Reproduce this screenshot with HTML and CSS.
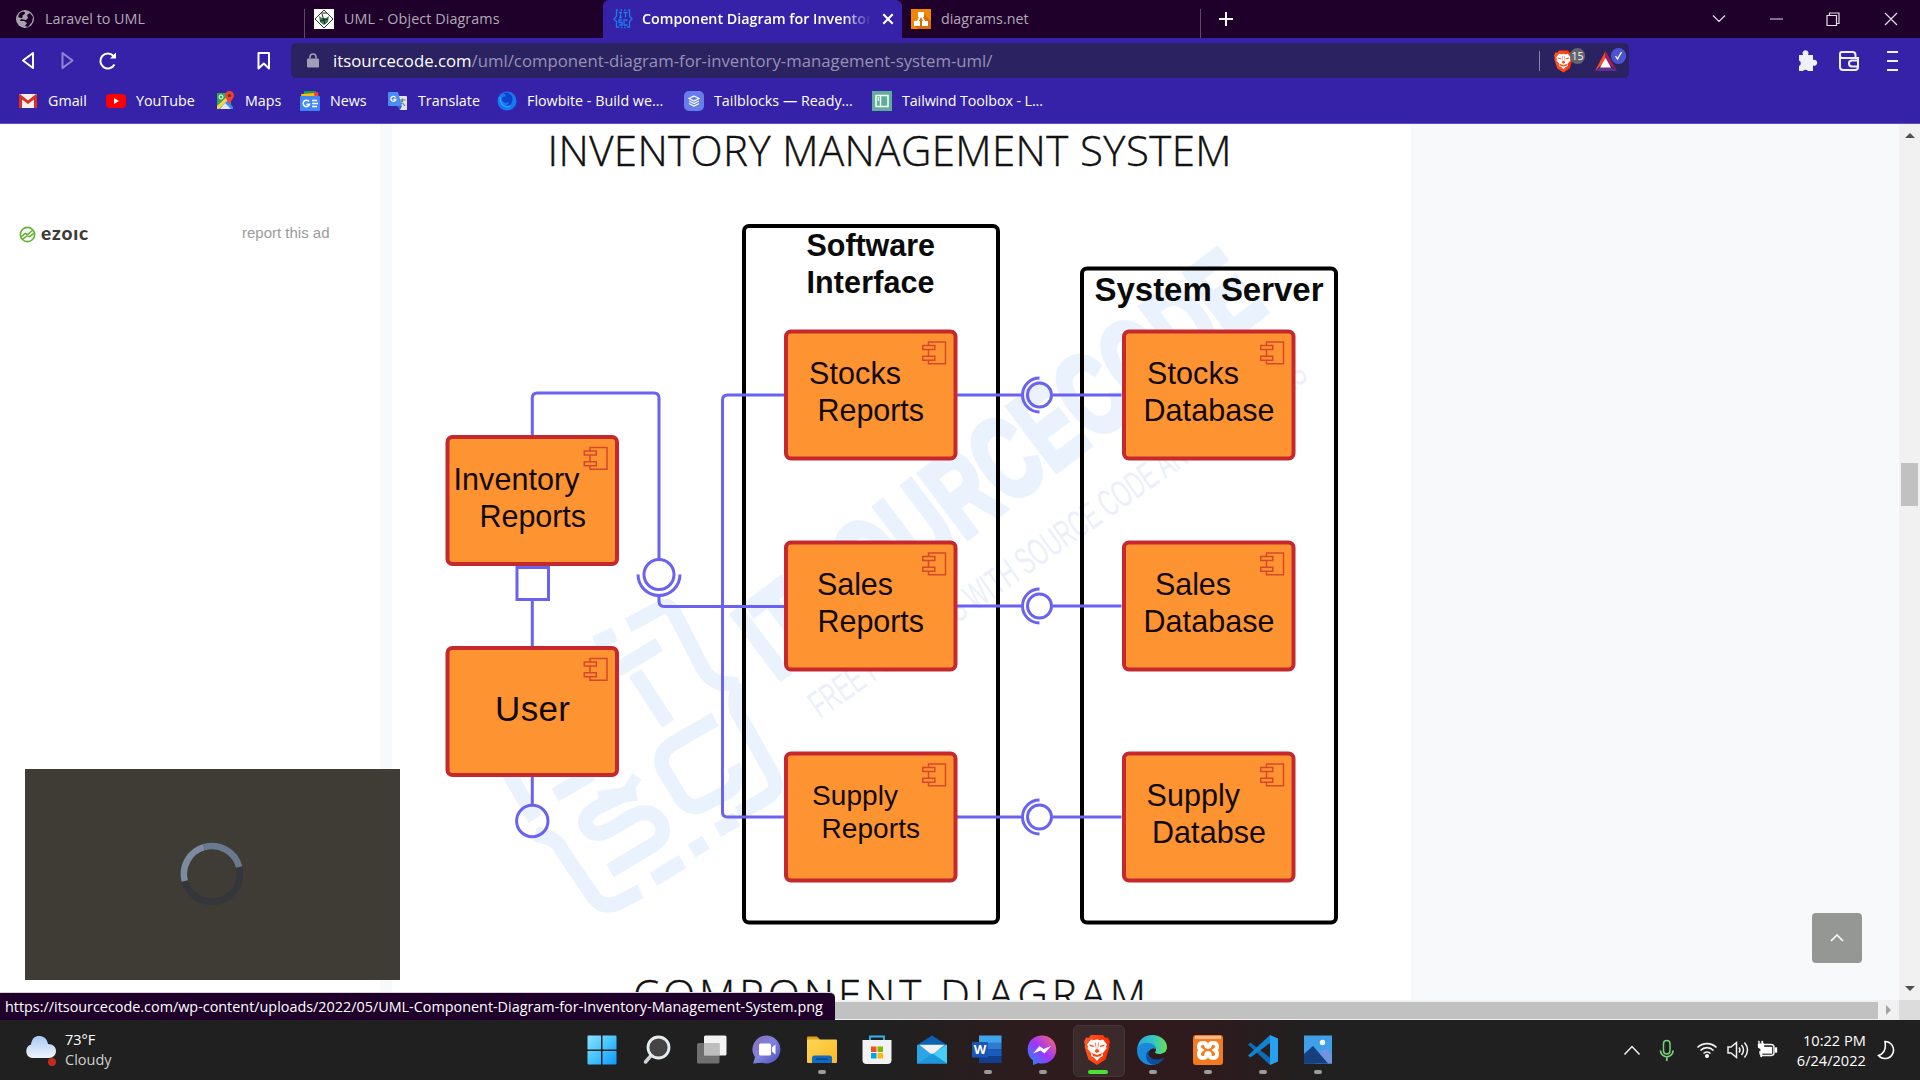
FILE: index.html
```html
<!DOCTYPE html>
<html lang="en">
<head>
<meta charset="utf-8">
<title>Component Diagram for Inventory Management System</title>
<link rel="stylesheet" href="styles.css">
</head>
<body>
<svg class="defs" width="0" height="0" aria-hidden="true">
  <defs>
    <linearGradient id="winG" x1="0" y1="0" x2="1" y2="1"><stop offset="0" stop-color="#8be2ff"/><stop offset=".5" stop-color="#45c4ff"/><stop offset="1" stop-color="#0f98ff"/></linearGradient>
    <linearGradient id="chatG" x1="0" y1="0" x2="1" y2="1"><stop offset="0" stop-color="#8f6bb4"/><stop offset=".5" stop-color="#7d83e0"/><stop offset="1" stop-color="#4c4bbd"/></linearGradient>
    <linearGradient id="foldG" x1="0" y1="0" x2="1" y2="1"><stop offset="0" stop-color="#ffd65c"/><stop offset="1" stop-color="#f8b91f"/></linearGradient>
    <linearGradient id="msgG" x1="0" y1="1" x2="1" y2="0"><stop offset="0" stop-color="#1690ff"/><stop offset=".5" stop-color="#a334fa"/><stop offset="1" stop-color="#ff6c60"/></linearGradient>
    <linearGradient id="braveG" x1="0" y1="0" x2="1" y2="0"><stop offset="0" stop-color="#ff5a1f"/><stop offset="1" stop-color="#ff2a00"/></linearGradient>
    <linearGradient id="edgeG" x1="0" y1="0" x2="1" y2="0"><stop offset="0" stop-color="#2aa8e0"/><stop offset=".55" stop-color="#35c6c4"/><stop offset="1" stop-color="#6ae04f"/></linearGradient>
    <linearGradient id="cloudG" x1="0" y1="0" x2="0" y2="1"><stop offset="0" stop-color="#a9c9f5"/><stop offset="1" stop-color="#eef4fd"/></linearGradient>
    <symbol id="lion" viewBox="0 0 26 30">
      <path fill="url(#braveG)" d="M7 0h12l2.500 3 2.500-.5L26 7l-1 3 .5 2-4 12.500L13 30 4.500 24.500.5 12 1 10 0 7l2-4.500 2.500.5z"/>
      <path fill="#fff" d="M7 4.500l3 .7 3-.9 3 .9 3-.7 4 5-1 2 .5 2-4 5 .5 2.500-3 1.500-3 3.500-3-3.500-3-1.500.5-2.500-4-5 .5-2-1-2z"/>
      <path fill="#fb4a1a" d="M5.500 9.500l5 1.500-1 1-4-1zM20.500 9.500l-5 1.500 1 1 4-1zM11.200 8l.8 6-1.500 2.500L13 18l2.500-1.500L14 14l.8-6-.8-.8-.3 7h-1.400l-.3-7zM8 18l5 2 5-2-1 3-4 1-4-1z"/>
    </symbol>
    <g id="comp">
      <rect class="box" x="2" y="2" width="169.500" height="127" rx="5"/>
      <path class="glyph" d="M144.500 16v-3.500h17v21.700h-17V31M144.500 20v6.500M138.800 16h12v4h-12zM138.800 26.700h12v4h-12z"/>
    </g>
    <g id="socket">
      <path d="M-83 0H-18M13 0H82"/><circle r="12"/><path d="M0-17A17 17 0 0 0 0 17"/>
    </g>
  </defs>
</svg>

<header class="chrome">
  <div class="tabstrip">
    <div class="tab t1"><svg class="fav" viewBox="0 0 20 20"><circle cx="10" cy="10" r="9" fill="#a6a1ac"/><path fill="#1e002a" d="M5 4c2-2 5-1.500 5 0 0 2-3 1.500-2.500 4 .5 1.500-2 1-3.500.5C2.500 8 4 5 5 4zM12 6l3-2 3 4-1 5-4 5-3-1 2-3-3-2-4 0 1-2 5 1 2-2z"/></svg><span class="cap c1">Laravel to UML</span></div>
    <div class="tab t2"><svg class="fav" viewBox="0 0 20 20"><path fill="#fff" d="M0 0h20v20H0z"/><path fill="none" stroke="#333" d="M10 1l9 9-9 9-9-9z"/><path fill="#3f7f55" d="M5 7l3 2h4l3-2-1 6-4 3-4-3z"/><path stroke="#222" d="M7 4l6 0M6 12l8-2M8 5l3 10"/></svg><span class="cap c2">UML - Object Diagrams</span></div>
    <div class="tab t3"><svg class="fav" viewBox="0 0 20 20"><path fill="none" stroke="#197bea" stroke-width="1.300" d="M5 1H3.500v6L1 10l2.500 2.500V18H6M15 1h1.500v6L19 10l-2.500 2.500V18H14M8 18.500h1.500M11 18.500h1.500M7.500 1h1.500M11 1h1.500M6 3.500h3M7.500 3.500v5M6 8.500h3M10.500 3.500h4M12.500 3.500v5M9 11H6v2.500h3V16H6M14.500 11H11v5h3.500"/></svg><span class="cap c3">Component Diagram for Inventory</span><svg class="x" viewBox="0 0 12 12"><path d="M2 2l8 8M10 2l-8 8"/></svg></div>
    <div class="tab t4"><svg class="fav" viewBox="0 0 20 20"><path fill="#f08705" d="M0 0h20v20H0z"/><path fill="#d86f00" d="M12 4l8 8v8H7l-4-4z"/><path fill="#fff" d="M7 3h6v5h-1l2 4h3v5h-6v-5h1l-2-4-2 4h1v5H3v-5h3l2-4H7z"/></svg><span class="cap c4">diagrams.net</span></div>
    <svg class="plus" viewBox="0 0 16 16"><path d="M8 1v14M1 8h14"/></svg>
    <svg class="winbtns" viewBox="0 0 186 14"><path d="M1 3.500l6 6 6-6M58 7h13M115 3.500h9.500v10H115zM117.500 3.500V1h9.500v10.500h-2.500M173 1l12 12M185 1l-12 12"/></svg>
  </div>
  <div class="toolbar">
    <svg class="nav" viewBox="0 0 270 36"><g fill="none" stroke="#fff" stroke-width="2" stroke-linejoin="round"><path d="M33 10v15l-10-7.500z"/><path opacity=".45" d="M62.500 10v15l10-7.500z"/><path d="M114.500 21.500a7.500 7.500 0 1 1-1-8.500"/><path d="M258.500 10h10.500v15.500l-5.200-5-5.300 5z"/></g><path fill="#fff" d="M116 9.500v6h-6z"/></svg>
    <div class="address">
      <svg class="lock" viewBox="0 0 12 14"><path fill="#a19fb6" d="M1 5h10q1 0 1 1v7q0 1-1 1H1q-1 0-1-1V6q0-1 1-1z"/><path fill="none" stroke="#a19fb6" stroke-width="1.600" d="M3 5V3.500a3 3 0 0 1 6 0V5"/></svg>
      <span class="url"><b>itsourcecode.com</b>/uml/component-diagram-for-inventory-management-system-uml/</span>
      <i class="rule"></i>
      <svg class="shield" viewBox="0 0 32 32"><use href="#lion" x="0" y="5" width="19" height="23"/><rect x="16" y="3" width="15" height="16" rx="7.500" fill="#62646e"/><text x="23.500" y="15" text-anchor="middle" class="badge">15</text></svg>
      <svg class="bat" viewBox="0 0 32 32"><path fill="#ff4724" d="M10.500 6v10L0 26z"/><path fill="#9e1f63" d="M10.500 6v10L22 26z"/><path fill="#662d91" d="M0 26h22l-6.500-4H6z"/><path fill="#fff" d="M10.500 13l5.500 9.500H5z"/><rect x="16" y="3" width="15" height="16" rx="7.500" fill="#4c54d2"/><path fill="none" stroke="#fff" stroke-width="1.300" d="M20.500 11l2 3 4-7"/></svg>
    </div>
    <svg class="tools" viewBox="0 0 102 26"><path fill="#f1effc" d="M2 7h4a3 3 0 1 1 5 0h5v5a3 3 0 1 1 0 5.500V23h-5a3 3 0 0 0-5 0H2v-5a3 3 0 0 0 0-5.500z"/><g fill="none" stroke="#f1effc" stroke-width="2"><path d="M58.500 9.500V7q0-3-3-3H45q-2 0-2 2v13q0 3 3 3h12q3 0 3-3v-9H45q-2 0-2-3M61 12.500h-6a3 3 0 0 0 0 6h6M90 4h11M90 13h11M90 22h11"/></g></svg>
  </div>
  <nav class="bookmarks">
    <a><svg viewBox="0 0 20 20"><path fill="#f3f1f0" d="M1 3h18v14H1z"/><path fill="#d93025" d="M1 17V4q0-1 1-1l8 6.500L18 3q1 0 1 1v13h-3V8.500L10 13 4 8.500V17z"/></svg><span class="b1">Gmail</span></a>
    <a><svg viewBox="0 0 20 20"><rect y="3" width="20" height="14" rx="4" fill="#f00"/><path fill="#fff" d="M8 7v6l5-3z"/></svg><span class="b2">YouTube</span></a>
    <a><svg viewBox="0 0 20 20"><path fill="#34a853" d="M2 2h14v16H2z"/><path fill="#4285f4" d="M12 9l6 7v2h-6l-4-4z"/><path fill="#fbd04b" d="M2 15L14 4l2 2L4 18H2z"/><path fill="#e7e7e7" d="M5 18l5-6 6 6z"/><circle cx="6" cy="6" r="2" fill="none" stroke="#fff"/><path fill="#ea4335" d="M14.500 0A4.500 4.500 0 0 1 19 4.500c0 3-3.500 5-4.500 9-1-4-4.500-6-4.500-9A4.500 4.500 0 0 1 14.500 0z"/><circle cx="14.500" cy="4.500" r="1.600" fill="#8c1d14"/></svg><span class="b3">Maps</span></a>
    <a><svg viewBox="0 0 20 20"><path fill="#0f9d58" d="M4 0h12v6H4z"/><path fill="#ea4335" d="M10 2l8-1 1 6h-8z"/><path fill="#fbbc04" d="M1 3l13-1 1 6H2z"/><rect y="5" width="20" height="15" rx="1" fill="#4285f4"/><path fill="none" stroke="#fff" stroke-width="1.600" d="M9 10.500a3.200 3.200 0 1 0 .5 2.700H6.500M12 9.500h5M12 12.500h6M12 15.500h5"/></svg><span class="b4">News</span></a>
    <a><svg viewBox="0 0 20 20"><path fill="#dfe3e8" d="M8 5h10q1 0 1 1v13h-7z"/><path fill="#4e8cf3" d="M1 1h9l4 14H1q-1 0-1-1V2q0-1 1-1z"/><path fill="#3367c6" d="M9 15h5l-2 4z"/><path fill="none" stroke="#fff" stroke-width="1.300" d="M7.500 6.500a2.500 2.500 0 1 0 .3 2H5.500"/><path fill="none" stroke="#6a7683" stroke-width="1.200" d="M11.500 9h6M14.500 7.500V9c0 2-1 3-1.500 4M13 10l4 5"/></svg><span class="b5">Translate</span></a>
    <a><svg viewBox="0 0 20 20"><circle cx="10" cy="10" r="9.500" fill="#1478f2"/><path fill="#0d42cf" d="M6 2c7-1 11 3 9 9-1 4-5 5-8 4 3 0 5-2 5-4-3 2-7 0-7-3 0-2 2-3 4-2 0-2-1-3-3-4z"/><path fill="none" stroke="#30a0ff" stroke-width="1.500" d="M3 6c0 8 5 11 10 9"/></svg><span class="b6">Flowbite - Build we...</span></a>
    <a><svg viewBox="0 0 20 20"><rect width="20" height="20" rx="5" fill="#667eea"/><path fill="none" stroke="#fff" stroke-width="1.200" d="M10 5l5 2.500-5 2.500-5-2.500zM5 10l5 2.500 5-2.500M5 12.500l5 2.500 5-2.500"/></svg><span class="b7">Tailblocks — Ready...</span></a>
    <a><svg viewBox="0 0 20 20"><path fill="#5fae97" d="M0 0h20v20H0z"/><path fill="none" stroke="#fff" stroke-width="1.500" d="M4 4.500h12v11H4zM8.500 4.500v11M5.500 7h1.500M5.500 9h1.500"/></svg><span class="b8">Tailwind Toolbox - L...</span></a>
  </nav>
</header>

<div class="view">
  <div class="page">
    <aside class="adcol">
      <div class="adrow">
        <svg class="ez" viewBox="0 0 16 16"><circle cx="8" cy="8" r="6.700" fill="none" stroke="#5fb52e" stroke-width="1.500"/><path fill="none" stroke="#5fb52e" stroke-width="1.500" d="M2 10l4-3 2 1 5-4M3 12.500L8 9l2 1 4-3"/></svg>
        <span class="ezoic">ezoıc</span><span class="report">report this ad</span>
      </div>
    </aside>
    <main class="article">
      <svg class="diagram" viewBox="392 124 1019 876">
        <g class="wm">
          <g transform="translate(520 380) scale(.3333 .3444)">
            <path d="M325 712L425 660Q450 650 470 690L550 840Q565 868 600 880L655 885M660 880Q640 920 650 960L760 1150Q780 1190 740 1212L655 1260M650 1275L592 1308M-40 1130L45 1275M45 1318L90 1330Q115 1342 125 1365L220 1500Q245 1535 290 1520L362 1485M225 765L285 738M290 842L418 768M345 850L445 998M585 985L460 1055Q410 1085 430 1130L480 1210Q510 1255 555 1230L625 1195Q665 1165 640 1120M350 1200L235 1215M340 1190L225 1245Q180 1275 205 1305Q230 1330 280 1300L340 1265Q400 1240 425 1290Q440 1330 390 1355L270 1425M105 1205L215 1143M325 1160L352 1178M400 1450L488 1398M515 1368L558 1342" stroke-width="44" fill="none"/>
          </g>
          <text class="wm-big" transform="translate(776 682) rotate(-37)" textLength="618" lengthAdjust="spacingAndGlyphs">ITSOURCECODE</text>
          <text class="wm-sub" transform="translate(820 719) rotate(-34.800)" textLength="596" lengthAdjust="spacingAndGlyphs">FREE PROJECTS WITH SOURCE CODE AND TUTORIALS</text>
        </g>
        <text class="title" x="547.500" y="165.500" textLength="684">INVENTORY MANAGEMENT SYSTEM</text>
        <text class="title" x="633" y="1010" textLength="513">COMPONENT DIAGRAM</text>
        <g class="frame"><rect x="744" y="226" width="254" height="696.500" rx="5"/><rect x="1082" y="268.500" width="254" height="654" rx="5"/></g>
        <g class="wire">
          <path d="M532.300 436V398q0-5 5-5H654q5 0 5 5V559M659 596v5q0 5.500 5 5.500H786M786 395H727.500q-5 0-5 5V812q0 5 5 5H786M532.300 601V647M532.300 777v28"/>
          <path d="M517 567.500h31.500V599.500H517z"/><circle cx="532.300" cy="821" r="15.700"/><circle cx="659" cy="574.500" r="15"/><path d="M638 574.500a21 21 0 0 0 42 0"/>
          <use href="#socket" x="1039.500" y="395"/><use href="#socket" x="1039.500" y="606"/><use href="#socket" x="1039.500" y="817"/>
        </g>
        <use href="#comp" x="445.500" y="435"/><use href="#comp" x="445.500" y="646"/>
        <use href="#comp" x="784" y="329.500"/><use href="#comp" x="784" y="540.500"/><use href="#comp" x="784" y="751.500"/>
        <use href="#comp" x="1122" y="329.500"/><use href="#comp" x="1122" y="540.500"/><use href="#comp" x="1122" y="751.500"/>
        <g class="head">
          <text x="806.500" y="256" textLength="128.500">Software</text><text x="806.500" y="292.500" textLength="128">Interface</text>
          <text class="wide" x="1094.500" y="300.500" textLength="229">System Server</text>
        </g>
        <g class="label">
          <text x="809" y="384" textLength="92">Stocks</text><text x="817.500" y="420.500" textLength="106.500">Reports</text>
          <text x="817" y="595" textLength="76">Sales</text><text x="817.500" y="631.500" textLength="106.500">Reports</text>
          <text class="small" x="812" y="804.500" textLength="86">Supply</text><text class="small" x="821.500" y="838" textLength="98.500">Reports</text>
          <text x="1147" y="384" textLength="92">Stocks</text><text x="1143.500" y="420.500" textLength="131">Database</text>
          <text x="1155" y="595" textLength="76">Sales</text><text x="1143.500" y="631.500" textLength="131">Database</text>
          <text x="1146.500" y="806" textLength="93.500">Supply</text><text x="1152" y="842.500" textLength="114">Databse</text>
          <text x="453.500" y="489.500" textLength="126">Inventory</text><text x="479.500" y="526.500" textLength="106.500">Reports</text>
          <text class="big" x="495" y="720.500" textLength="75">User</text>
        </g>
      </svg>
    </main>
    <div class="vscroll"><i class="up"></i><i class="thumb"></i><i class="down"></i></div>
  </div>
  <div class="hscroll"><i class="bar"></i><i class="right"></i><i class="corner"></i></div>
  <div class="player"><svg viewBox="0 0 64 64"><g fill="none" stroke-width="6.500"><circle cx="32" cy="32" r="28" stroke="#33363a"/><path stroke="#7d8ba1" d="M4.800 39A28 28 0 0 1 24 5.200"/><path stroke="#69798f" d="M24 5.200A28 28 0 0 1 59.200 25"/></g></svg></div>
  <div class="totop"><svg viewBox="0 0 14 8"><path d="M1 7l6-6 6 6"/></svg></div>
  <div class="status"><span>https://itsourcecode.com/wp-content/uploads/2022/05/UML-Component-Diagram-for-Inventory-Management-System.png</span></div>
</div>

<footer class="taskbar">
  <div class="weather">
    <svg viewBox="0 0 34 32"><path fill="url(#cloudG)" d="M7 24a7 7 0 0 1-1-13.500C7 4 10 2 14 2s8 2 9 8c5 0 8 3 8 7s-3 7-7 7z"/><circle cx="27" cy="28" r="4" fill="#c42b1c"/></svg>
    <div><span>73°F</span><span class="dim">Cloudy</span></div>
  </div>
  <div class="apps">
    <div><svg viewBox="0 0 30 30"><path fill="url(#winG)" d="M.5 1.500Q.5.500 1.500.500H14v14H.5zM15.500.5H28.500q1 0 1 1V14.500h-14zM.5 16H14V29.500H1.500q-1 0-1-1zM15.500 16h14V28.500q0 1-1 1H15.500z"/></svg></div>
    <div><svg viewBox="0 0 30 30"><path stroke="#cfd3d6" stroke-width="3.500" stroke-linecap="round" d="M9.500 20L3.500 27"/><circle cx="16.500" cy="12.500" r="10.500" fill="#444" stroke="#e6ebee" stroke-width="2.800"/></svg></div>
    <div><svg viewBox="0 0 30 30"><rect x="7" y=".5" width="22.500" height="20" rx="1.500" fill="#f2f2f2"/><rect y="8" width="22.500" height="20.500" rx="1.500" fill="#8a8a8a" fill-opacity=".75"/><path fill="#bdbdbd" d="M7 8h15.500v12.500H7z"/></svg></div>
    <div><svg viewBox="0 0 30 30"><path fill="url(#chatG)" d="M15 .5a14 14 0 1 1-5 27.300L1 28.500l2-6A14 14 0 0 1 15 .5z"/><rect x="7" y="8.500" width="12" height="12" rx="1.500" fill="#fff"/><path fill="#fff" d="M20 12.500l3.500-3v10l-3.500-3z"/></svg></div>
    <div class="on"><svg viewBox="0 0 30 30"><path fill="#e0a113" d="M0 2.500q0-1 1-1H10l3 3v5H0z"/><rect y="4.500" width="30" height="23.500" rx="1" fill="url(#foldG)"/><path fill="#1269c0" d="M5 28v-5q0-2.500 2.500-2.500h15q2.500 0 2.500 2.500v5z"/><path stroke="#073f80" stroke-width="1.300" d="M9 24h12"/></svg></div>
    <div><svg viewBox="0 0 30 30"><path fill="none" stroke="#33b4ee" stroke-width="1.800" d="M8 6V1.500h14V6"/><path fill="#f3f3f3" d="M.5 5h29v20q0 4-4 4h-21q-4 0-4-4z"/><path fill="#f25022" d="M9 11.500h5.500V17H9z"/><path fill="#7fba00" d="M15.500 11.500H21V17h-5.500z"/><path fill="#00a4ef" d="M9 18h5.500v5.500H9z"/><path fill="#ffb900" d="M15.500 18H21v5.500h-5.500z"/></svg></div>
    <div><svg viewBox="0 0 30 30"><path fill="#0b62b4" d="M0 10L15 .5 30 10v4H0z"/><path fill="#2aa6e6" d="M0 10h30v18.500H0z"/><path fill="#48cdf5" d="M30 9.500v19L16 19z"/><path fill="#1f95de" d="M0 28.500L16 19l14 9.500z"/><path fill="#f0f0f0" d="M2.500 9.700h25L18 17.500q-3 2.500-6 0z"/></svg></div>
    <div class="on"><svg viewBox="0 0 30 30"><path fill="#41a5ee" d="M7 .5h22.500V8H7z"/><path fill="#2b7cd3" d="M7 7.500h22.500v7H7z"/><path fill="#185abd" d="M7 14.500h22.500v7H7z"/><path fill="#103f91" d="M7 21.500h22.500V28H7z"/><rect y="7" width="16" height="15.500" rx="1" fill="#1a57b5"/><text class="w" x="8" y="19" text-anchor="middle">W</text></svg></div>
    <div class="on"><svg viewBox="0 0 30 30"><path fill="url(#msgG)" d="M15 .5c8 0 14.300 6 14.300 14S23 28.500 15 28.500q-2 0-3.500-.5L6 30V25.500C2.500 23 .7 19 .7 14.500.7 6 7 .5 15 .5z"/><path fill="#fff" d="M6 18.500l6.500-7.500 4 3 7.500-3-6.500 7.500-4-3z"/></svg></div>
    <div class="active"><svg viewBox="0 0 30 30"><use href="#lion" x="2" y="0" width="26" height="30"/></svg></div>
    <div class="on"><svg viewBox="0 0 30 30"><path fill="url(#edgeG)" d="M0 15C1 5 7 0 15 0c9 0 15 6 15 12 0 5-4 7-8 7-3 0-4-1-4-2 2-2 1-6-3-7C9 8 3 10 0 15z"/><path fill="#1889da" d="M0 15C1 10 6 7 11 8c5 0 8 3 7.500 6C15 12 10 16 11 21c1 4 5 8 11 7-10 5-22 0-22-13z"/><path fill="#0d4f9e" d="M11.500 15c-1 5 2 10 9 9.500 3 0 5-1 7-2-2 4-7 7.500-12 7C9 28 7 20 11.500 15z"/></svg></div>
    <div class="on"><svg viewBox="0 0 30 30"><rect width="30" height="30" rx="3" fill="#f47a20"/><path fill="#fbb887" d="M2 1h26v3H2z"/><path fill="none" stroke="#fff" stroke-width="4" d="M10 8c6 0 1 4 5 4s-1-4 5-4c5 0 5 5 2 7 3 2 3 8-2 8-6 0-1-5-5-5s1 5-5 5c-5 0-5-6-2-8-3-2-3-7 2-7z"/></svg></div>
    <div class="on"><svg viewBox="0 0 30 30"><path fill="#0c6cb4" d="M0 9.500l2.500-2 20 15.500L22 30z"/><path fill="#1283d0" d="M0 20.500l2.500 2L22 8V0z"/><path fill="#27a0f2" d="M22 0l8 3.500v23L22 30z"/></svg></div>
    <div class="on"><svg viewBox="0 0 30 30"><path fill="#3f9fe8" d="M1 .5h28v28H1z"/><path fill="#7193e0" d="M13 22l9-9 7 7v8.500H13z"/><path fill="#163f80" d="M1 19l9-8 15 17.500H1z"/><circle cx="19.500" cy="7.500" r="2.700" fill="#fff"/></svg></div>
  </div>
  <svg class="tray" viewBox="0 0 160 28"><g fill="none" stroke="#f2f2f2" stroke-width="1.500"><path d="M4.500 18.500l7.500-8 7.500 8"/><g stroke="#76d275"><rect x="43.500" y="4.500" width="6.500" height="13.500" rx="3.200"/><path stroke-width="1.800" d="M40.500 14.500a6.300 6.300 0 0 0 12.600 0M46.800 21v4"/></g><path stroke-width="1.700" d="M77.500 11.500a13.500 13.500 0 0 1 19 0M80.500 14.500a9 9 0 0 1 13 0M83.500 17.500a5 5 0 0 1 7 0"/><path d="M108 11h3l5.500-4.500v15L111 17h-3zM119 11.500q2 2.500 0 5M121.500 9q4 5 0 10M124.500 6.500q6 7.500 0 15"/><path d="M143 8.500h8q3 0 3 3v5q0 3-3 3h-8q-3 0-3-3V15"/></g><circle cx="87" cy="20" r="2" fill="#fff"/><path fill="#fff" d="M142 11h10v6.500h-10zM155 11.500h2v5h-2zM138 5h1.500v2.500h2V5h1.500v2.500h1v4l-2 1.500V21h-1.500v-8l-2.500-1.500v-4h1z" stroke="#fff" stroke-width=".3"/></svg>
  <div class="clock"><span>10:22 PM</span><span class="date">6/24/2022</span></div>
  <svg class="moon" viewBox="0 0 18 20"><path d="M8 1.500A8.500 8.500 0 1 1 1.500 15.500Q10 13 8 1.500z"/></svg>
</footer>
</body>
</html>
```
FILE: styles.css
```css
* { box-sizing: border-box; }
body { margin: 0; width: 1920px; height: 1080px; overflow: hidden; display: flex; flex-direction: column; background: #fff; font-family: "Open Sans", "Noto Sans", sans-serif; }
svg { display: block; flex: none; }
.defs { position: absolute; }

/* browser chrome */
.chrome { height: 124px; background: #3522a8; border-bottom: 1px solid #6150bd; flex: none; }
.tabstrip { height: 38px; background: #1e002a; display: flex; align-items: center; font-size: 14.3px; color: #b3a9b8; white-space: nowrap; }
.tab { height: 38px; display: flex; align-items: center; position: relative; }
.tab .fav { width: 20px; height: 20px; margin: 0 10px 0 10px; }
.cap { padding-bottom: 2px; }
.t1 { width: 305px; padding-left: 5px; }
.t2 { width: 298px; }
.t2 .fav { margin-left: 9px; }
.c2 { letter-spacing: .1px; }
.t1::after, .t4::after { content: ""; position: absolute; right: 0; top: 9px; width: 1px; height: 29px; background: #5c4a66; }
.t3 { width: 299px; background: #3522a8; border-radius: 6px 6px 0 0; color: #fff; font-weight: 600; }
.t3 .fav { margin-right: 9px; }
.t4 { width: 299px; }
.t4 .fav { margin-left: 9px; }
.c3 { width: 229px; overflow: hidden; -webkit-mask-image: linear-gradient(90deg, #000 88%, transparent); mask-image: linear-gradient(90deg, #000 88%, transparent); }
.x { width: 14px; height: 14px; margin-left: 10px; stroke: #fff; stroke-width: 1.8; }
.plus { width: 16px; height: 16px; margin-left: 17px; stroke: #fff; stroke-width: 2; }
.winbtns { width: 186px; height: 14px; margin-left: auto; margin-right: 22px; fill: none; stroke: #e6dfe9; stroke-width: 1.2; }
.toolbar { height: 45px; display: flex; align-items: center; }
.nav { width: 270px; height: 36px; margin-right: 21px; }
.address { width: 1338px; height: 35px; background: #2b2262; border-radius: 5px; display: flex; align-items: center; padding-left: 16px; }
.lock { width: 12px; height: 15px; }
.url { margin-left: 14px; font-size: 16.75px; color: #9791b8; white-space: nowrap; }
.url b { font-weight: 400; color: #fff; }
.rule { margin-left: auto; width: 1px; height: 20px; background: #8a84ae; }
.shield { width: 32px; height: 32px; margin-left: 14px; }
.bat { width: 32px; height: 32px; margin: 0 2px 0 9px; }
.badge { font-size: 10.5px; fill: #fff; }
.tools { width: 102px; height: 26px; margin-left: auto; margin-right: 21px; }
.bookmarks { height: 36px; display: grid; grid-template-columns: 88px 109px 85px 88px 109px 187px 188px 200px; align-items: center; padding-left: 18px; color: #fff; font-size: 14.3px; white-space: nowrap; }
.bookmarks a { display: flex; align-items: center; gap: 10px; }
.bookmarks svg { width: 20px; height: 20px; }
.bookmarks span { padding-bottom: 2px; }
.b8 { letter-spacing: -.1px; }

/* page viewport */
.view { height: 896px; position: relative; flex: none; }
.page { height: 876px; display: flex; background: #f7f9fb; }
.adcol { width: 380px; background: #fff; padding: 98px 0 0 19px; }
.adrow { display: flex; align-items: center; height: 22px; }
.ez { width: 17px; height: 17px; margin-top: 2px; }
.ezoic { font: 900 19px/22px Lato, sans-serif; letter-spacing: .8px; color: #3d3a36; margin-left: 5px; width: 201px; }
.report { font: 15px/20px "Liberation Sans", Arial, sans-serif; color: #9b9b9b; white-space: nowrap; }
.article { width: 1019px; margin-left: 12px; background: #fff; }
.diagram { width: 1019px; height: 876px; overflow: hidden; font-family: "Liberation Sans", Arial, sans-serif; }
.title { font-family: "Open Sans", "Noto Sans", sans-serif; font-weight: 300; font-size: 42px; fill: #111; stroke: #111; stroke-width: .4; }
.box { fill: #fd9431; stroke: #c5292d; stroke-width: 4; }
.glyph { fill: none; stroke: #d8472b; stroke-width: 1.5; }
.frame { fill: none; stroke: #000; stroke-width: 4; }
.wire { fill: none; stroke: #6b62f2; stroke-width: 3; }
.head { font-weight: 700; font-size: 30.5px; fill: #0a0a0a; }
.head .wide { font-size: 33px; }
.label { font-size: 30.5px; fill: #120a02; }
.label .small { font-size: 28px; }
.label .big { font-size: 35px; }
.wm { stroke: #eaf3fd; }
.wm-big { font-size: 116px; font-weight: 700; fill: #eaf3fd; stroke-width: 6; }
.wm-sub { font-size: 38px; fill: #eceff9; stroke: none; }
.vscroll { width: 21px; margin-left: auto; background: #f1f1f1; display: flex; flex-direction: column; align-items: center; }
.up { margin-top: 9px; border: 5px solid transparent; border-top: 0; border-bottom: 5px solid #505050; }
.thumb { margin-top: 325px; width: 17px; height: 43px; background: #c1c1c1; }
.down { margin-top: auto; margin-bottom: 9px; border: 5px solid transparent; border-bottom: 0; border-top: 5px solid #505050; }
.hscroll { height: 20px; background: #f1f1f1; display: flex; align-items: center; }
.bar { width: 1878px; height: 17px; background: #c1c1c1; }
.right { margin-left: 8px; border: 5px solid transparent; border-right: 0; border-left: 5px solid #a3a3a3; }
.corner { margin-left: auto; width: 21px; height: 20px; background: #dcdcdc; }

/* overlays */
.player { position: absolute; left: 25px; top: 645px; width: 375px; height: 211px; background: #3f3c36; display: flex; align-items: center; justify-content: center; padding: 0 1px 2px 0; }
.player svg { width: 64px; height: 64px; }
.totop { position: absolute; left: 1812px; top: 789px; width: 50px; height: 50px; border-radius: 4px; background: #959795; display: flex; align-items: center; justify-content: center; }
.totop svg { width: 14px; height: 8px; fill: none; stroke: #fff; stroke-width: 1.6; }
.status { position: absolute; left: 0; top: 868px; width: 835px; height: 28px; background: #1f002b; border-top: 1px solid #d9d5d6; border-top-right-radius: 5px; padding-left: 5px; color: #fff; font-size: 14.38px; line-height: 27px; white-space: nowrap; }

/* taskbar */
.taskbar { height: 60px; flex: none; display: flex; align-items: center; color: #fff; background: linear-gradient(90deg, #202020 46%, #2e1b1d 54%, #2f1a1d 62%, #202020 69%); }
.weather { width: 574px; display: flex; align-items: center; padding-left: 25px; font-size: 14.5px; line-height: 20px; }
.weather svg { width: 34px; height: 32px; margin-right: 6px; }
.weather span { display: block; }
.dim { color: #cfcfcf; }
.apps { display: flex; }
.apps div { width: 55.1px; height: 60px; display: flex; align-items: center; justify-content: center; position: relative; }
.apps svg { width: 30px; height: 30px; position: relative; }
.on::after { content: ""; position: absolute; left: 24px; top: 50px; width: 8px; height: 4px; border-radius: 2px; background: #9b9b9b; }
.active::before { content: ""; position: absolute; left: 3px; top: 5px; width: 50px; height: 50px; border-radius: 5px; background: #3b2a2c; border: 1px solid #473638; }
.active::after { content: ""; position: absolute; left: 18px; top: 50px; width: 20px; height: 4px; border-radius: 2px; background: #4be234; }
.w { font: 700 13px "Open Sans", sans-serif; fill: #fff; }
.tray { width: 160px; height: 28px; margin-left: 274.6px; }
.clock { width: 86px; text-align: right; font-size: 14.6px; line-height: 20px; padding-bottom: 1px; }
.clock span { display: block; }
.moon { width: 18px; height: 20px; margin-left: 11px; fill: none; stroke: #fff; stroke-width: 1.6; }
```
